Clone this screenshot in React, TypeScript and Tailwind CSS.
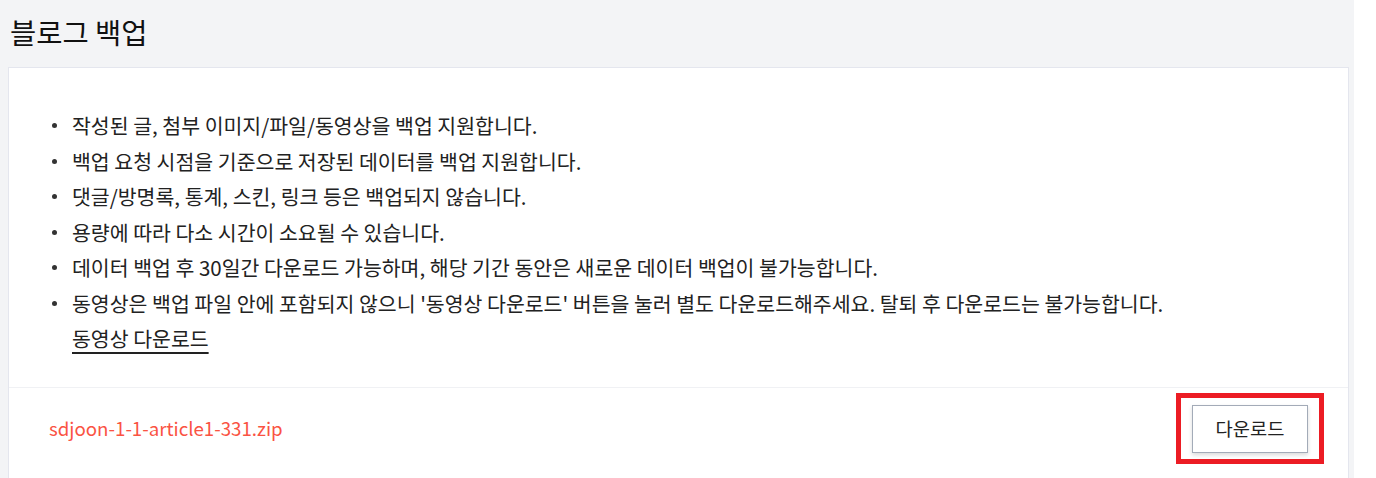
const items = [
  '작성된 글, 첨부 이미지/파일/동영상을 백업 지원합니다.',
  '백업 요청 시점을 기준으로 저장된 데이터를 백업 지원합니다.',
  '댓글/방명록, 통계, 스킨, 링크 등은 백업되지 않습니다.',
  '용량에 따라 다소 시간이 소요될 수 있습니다.',
  '데이터 백업 후 30일간 다운로드 가능하며, 해당 기간 동안은 새로운 데이터 백업이 불가능합니다.',
  "동영상은 백업 파일 안에 포함되지 않으니 '동영상 다운로드' 버튼을 눌러 별도 다운로드해주세요. 탈퇴 후 다운로드는 불가능합니다.",
];

export default function App() {
  return (
    <div
      className="flex h-[478px] w-[1376px] overflow-hidden bg-white text-[#222]"
      style={{ fontFamily: '"Noto Sans CJK KR", "Noto Sans", sans-serif' }}
    >
      <div className="flex w-[1354px] flex-col bg-[#f3f4f6] pl-2 pr-[5px]">
        <h1 className="pl-[2px] pt-[12px] text-[28.5px] leading-[40px] text-[#111]">블로그 백업</h1>
        <div className="mt-[15px] flex-1 border border-b-0 border-[#e4e6ee] bg-white">
          <ul className="pb-[30px] pl-[43px] pr-10 pt-[40px] text-[20.5px] leading-[35.5px]">
            {items.map((text, i) => (
              <li key={i} className="flex">
                <span className="flex w-[20px] shrink-0 items-center">
                  <span className="h-[5px] w-[5px] rounded-full bg-[#333]" />
                </span>
                <span>{text}</span>
              </li>
            ))}
            <li className="pl-[20px]">
              <a href="#" className="underline decoration-[1.5px] underline-offset-[5px]">동영상 다운로드</a>
            </li>
          </ul>
          <div className="flex items-center justify-between border-t border-[#f0f1f4] px-10 py-[17px]">
            <span className="text-[18.7px] text-[#fa5343]">sdjoon-1-1-article1-331.zip</span>
            <div className="relative">
              <button className="h-[48px] w-[116px] border border-[#a3abb8] bg-white text-[18.7px] text-[#222] shadow-[0_2px_4px_rgba(0,0,0,0.15)]">
                다운로드
              </button>
              <div className="pointer-events-none absolute -bottom-[11px] -left-[16px] -right-[16px] -top-[12px] border-[5px] border-[#ec1c24]" />
            </div>
          </div>
        </div>
      </div>
    </div>
  );
}
